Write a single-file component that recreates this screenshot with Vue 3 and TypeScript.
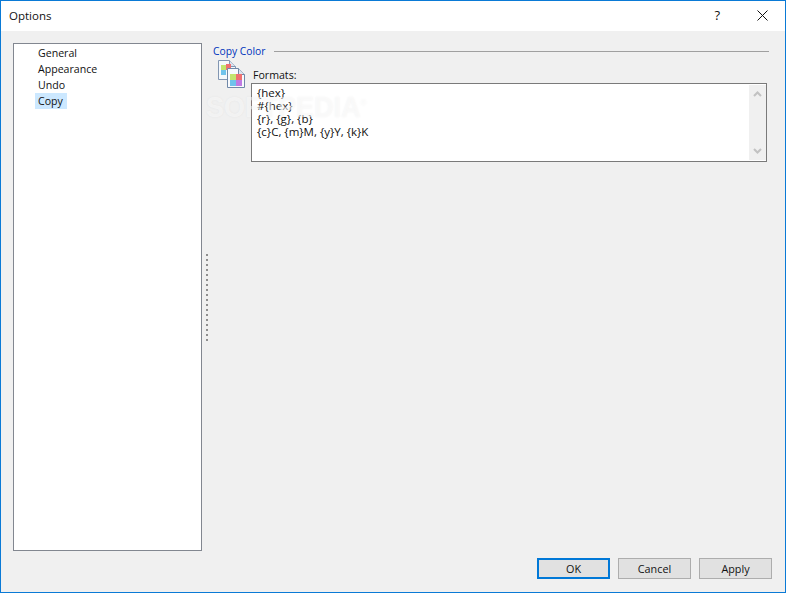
<script setup lang="ts">
const items: string[] = ['General', 'Appearance', 'Undo', 'Copy']
const formats: string[] = ['{hex}', '#{hex}', '{r}, {g}, {b}', '{c}C, {m}M, {y}Y, {k}K']
const dots: number[] = Array.from({ length: 18 }, (_, i) => i)
</script>

<template>
  <div class="window">
    <header class="titlebar">
      <span class="title">Options</span>
      <span class="help">?</span>
      <svg class="close" width="11" height="11" viewBox="0 0 11 11">
        <path d="M0.5 0.5L10.5 10.5M10.5 0.5L0.5 10.5" stroke="#111" stroke-width="1" fill="none" />
      </svg>
    </header>
    <main class="main">
      <nav class="tree">
        <div v-for="item in items" :key="item" class="tree-row">
          <span class="tree-item" :class="{ selected: item === 'Copy' }">{{ item }}</span>
        </div>
      </nav>
      <div class="splitter">
        <i v-for="d in dots" :key="d" class="dot"></i>
      </div>
      <section class="panel">
        <div class="group-head">
          <span class="group-title">Copy Color</span>
          <span class="group-line"></span>
        </div>
        <div class="group-body">
          <svg class="doc-icon" width="28" height="30" viewBox="0 0 28 30">
            <path d="M0.5 1.5H11.5L17.5 7.5V20.5H0.5Z" fill="#f4f8fc" stroke="#8296b2" />
            <path d="M11.5 1.5V7.5H17.5" fill="#dbe3ee" stroke="#8296b2" />
            <rect x="3" y="6" width="5" height="5" fill="#c3e46e" />
            <rect x="8" y="5" width="5" height="6" fill="#ef7070" />
            <rect x="3" y="11" width="5" height="5" fill="#6fc3ec" />
            <path d="M9.5 9.5H20.5L26.5 15.5V28.5H9.5Z" fill="#f8fafd" stroke="#7088a8" />
            <path d="M20.5 9.5V15.5H26.5" fill="#dbe3ee" stroke="#7088a8" />
            <rect x="12" y="15" width="6" height="6" fill="#c3e46e" />
            <rect x="18" y="15" width="6" height="6" fill="#ef7070" />
            <rect x="12" y="21" width="6" height="6" fill="#6fc3ec" />
            <rect x="18" y="21" width="6" height="6" fill="#bf7ae2" />
          </svg>
          <div class="field">
            <label class="field-label">Formats:</label>
            <div class="textbox">
              <div class="lines">
                <div v-for="f in formats" :key="f" class="line">{{ f }}</div>
              </div>
              <div class="scrollbar">
                <svg width="9" height="6" viewBox="0 0 9 6"><path d="M1 5L4.5 1.5L8 5" stroke="#c2c2c2" stroke-width="2" fill="none" /></svg>
                <svg width="9" height="6" viewBox="0 0 9 6"><path d="M1 1L4.5 4.5L8 1" stroke="#c2c2c2" stroke-width="2" fill="none" /></svg>
              </div>
            </div>
          </div>
        </div>
      </section>
    </main>
    <footer class="footer">
      <button class="btn default">OK</button>
      <button class="btn">Cancel</button>
      <button class="btn">Apply</button>
    </footer>
    <div class="watermark">SOFTPEDIA<sup>®</sup></div>
  </div>
</template>

<style>
html, body { margin: 0; padding: 0; }
</style>

<style scoped>
.window {
  position: relative;
  box-sizing: border-box;
  width: 786px;
  height: 593px;
  border: 1px solid #0a7ad6;
  background: #f0f0f0;
  display: flex;
  flex-direction: column;
  overflow: hidden;
  font-family: "Open Sans", "Noto Sans", sans-serif;
  font-size: 10.6px;
  color: #111;
}
.titlebar {
  height: 30px;
  background: #fff;
  display: flex;
  align-items: center;
  padding: 0 0 2px 8px;
  box-sizing: border-box;
  flex: none;
}
.title { font-size: 11.5px; flex: 1; }
.help { font-size: 13px; margin-right: 37px; }
.close { margin-right: 17px; }
.main {
  flex: 1;
  display: flex;
  min-height: 0;
  padding: 12px 16px 0 12px;
}
.tree {
  box-sizing: border-box;
  width: 189px;
  height: 508px;
  border: 1px solid #828790;
  background: #fff;
  padding: 1px 0 0 21px;
  flex: none;
}
.tree-row { height: 16px; display: flex; align-items: center; }
.tree-item { padding: 0 4px 0 3px; line-height: 16px; }
.tree-item.selected { background: #cce8ff; }
.splitter {
  width: 11px;
  flex: none;
  display: flex;
  flex-direction: column;
  justify-content: center;
  align-items: flex-start;
  gap: 3px;
  height: 508px;
  padding: 1px 0 0 4px;
  box-sizing: border-box;
}
.dot { width: 2px; height: 2px; background: #8e8e8e; display: block; }
.panel { flex: 1; min-width: 0; }
.group-head { display: flex; align-items: center; height: 16px; }
.group-title { color: #0033bc; font-size: 10.3px; padding-bottom: 1px; }
.group-line { flex: 1; height: 1px; background: #a0a0a0; margin-left: 8px; }
.group-body { display: flex; padding: 0 2px 0 5px; }
.doc-icon { flex: none; margin-right: 5px; }
.field { flex: 1; min-width: 0; padding-top: 8px; }
.field-label { display: block; height: 16px; line-height: 16px; padding-left: 2px; }
.textbox {
  box-sizing: border-box;
  height: 79px;
  border: 1px solid #7a7a7a;
  background: #fff;
  display: flex;
}
.lines { flex: 1; padding: 2px 5px; font-size: 11.5px; }
.line { height: 13px; line-height: 13px; }
.scrollbar {
  width: 17px;
  margin: 1px 0;
  background: #f0f0f0;
  display: flex;
  flex-direction: column;
  justify-content: space-between;
  align-items: center;
  padding: 6px 0;
  box-sizing: border-box;
}
.footer {
  flex: none;
  height: 41px;
  box-sizing: border-box;
  padding: 7px 13px 0 0;
  display: flex;
  justify-content: flex-end;
  gap: 8px;
}
.btn {
  box-sizing: border-box;
  width: 73px;
  height: 21px;
  padding: 0;
  border: 1px solid #adadad;
  background: #e1e1e1;
  font: inherit;
  font-size: 10.8px;
  color: #111;
}
.btn.default { border: 2px solid #0078d7; }
.watermark {
  position: absolute;
  left: 205px;
  top: 89px;
  font-family: "Liberation Sans", sans-serif;
  font-weight: 700;
  font-size: 30px;
  color: rgba(255, 255, 255, 0.5);
  text-shadow: 0 0 2px rgba(130, 130, 130, 0.1);
  transform: scaleX(0.9);
  transform-origin: left center;
  pointer-events: none;
}
.watermark sup { font-size: 9px; font-weight: 400; }
</style>
